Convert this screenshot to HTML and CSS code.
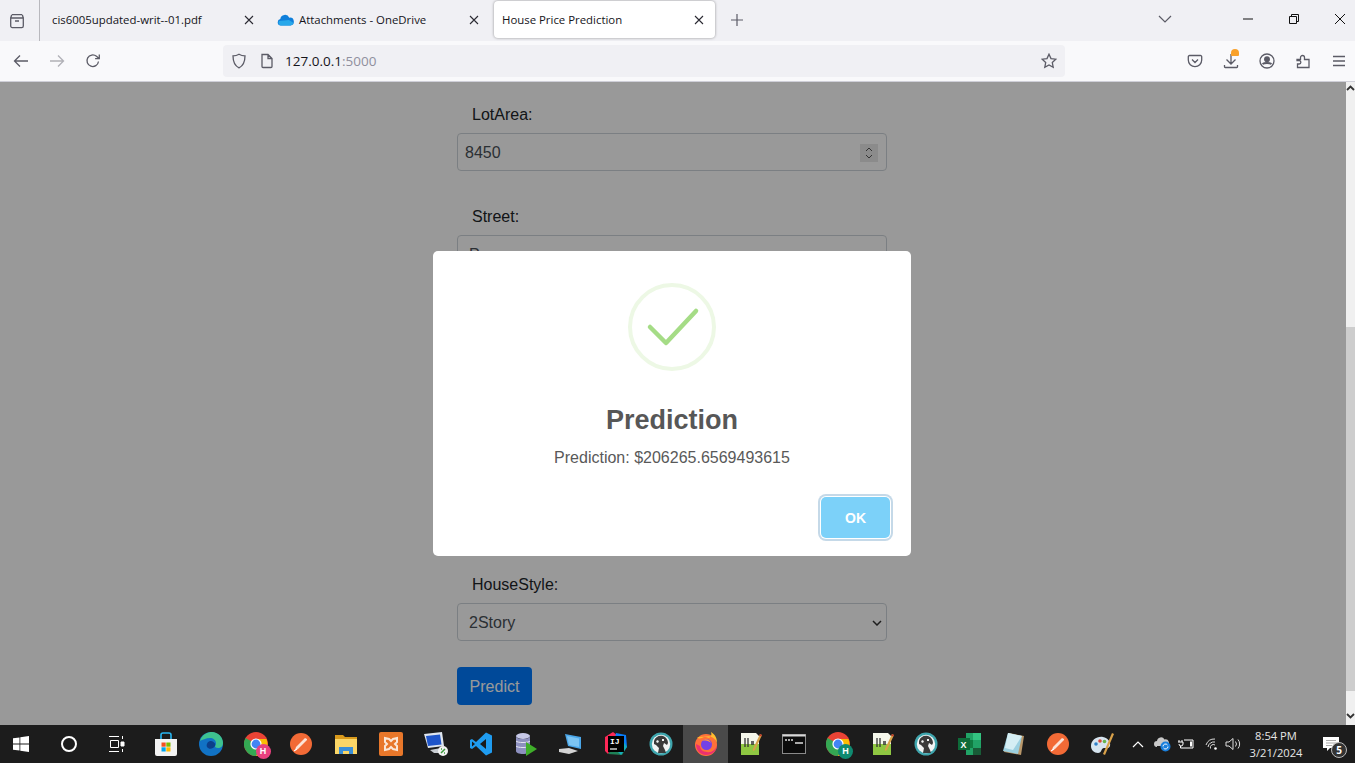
FILE: index.html
```html
<!DOCTYPE html>
<html>
<head>
    <meta charset="utf-8">
    <title>House Price Prediction</title>
    <link rel="stylesheet" href="styles.css">
</head>
<body>
    <!-- shared taskbar icons -->
    <svg class="defs" width="0" height="0">
        <symbol id="dbeaver" viewBox="0 0 24 24">
            <circle cx="12" cy="12" r="11.5" fill="#3fa5ad"/>
            <circle cx="12" cy="12" r="9.2" fill="#f2f4f4"/>
            <path d="M5 9c1-4 5-6 9-5 3 1 5 4 5 7l-1 2-3-2-1 3 2 4 1 3H9l1-5-3-3-2-1z" fill="#3a3a3a"/>
            <path d="M7 9l2-1 1 2-2 1zM13 7l2 0 0 2-2 0z" fill="#f2f4f4"/>
        </symbol>
        <symbol id="brush" viewBox="0 0 24 24">
            <circle cx="12" cy="12" r="11" fill="#f26a36"/>
            <path d="M6 18l1-3 9-9 2 1 0 1-9 9z" fill="#fbe3d8"/>
            <path d="M5 19l3-2" stroke="#fff" stroke-width="1.2"/>
        </symbol>
        <symbol id="npp" viewBox="0 0 24 24">
            <path d="M3 1h15l3 3v19H3z" fill="#f4f6ea"/>
            <path d="M3 12h18v11H3z" fill="#8fc742"/>
            <path d="M7 6v9M10 6v9M13 10h3M13 12h3" stroke="#333" stroke-width="1.3" fill="none"/>
            <path d="M15 17L22 2l2 1-7 15-2 1z" fill="#d8a24a"/>
            <path d="M22 2l2 1-.8 1.6-2-1z" fill="#c0392b"/>
        </symbol>
        <symbol id="chrome" viewBox="0 0 24 24">
            <circle cx="12" cy="12" r="12" fill="#ea4335"/>
            <path d="M12 12L1.6 6A12 12 0 0 0 12 24l6-10z" fill="#34a853"/>
            <path d="M12 7h10.4A12 12 0 0 1 12 24l6-10z" fill="#fbbc04"/>
            <circle cx="12" cy="12" r="5.6" fill="#fff"/>
            <circle cx="12" cy="12" r="4.4" fill="#4285f4"/>
        </symbol>
    </svg>

    <div class="tabbar">
        <div class="view-btn">
            <svg width="16" height="16" viewBox="0 0 16 16" fill="none" stroke="#5b5b66" stroke-width="1.3"><path d="M3 1.7h10M1.7 5h12.6v8a1.6 1.6 0 0 1-1.6 1.6H3.3A1.6 1.6 0 0 1 1.7 13zM1.7 5l1-3.3M14.3 5l-1-3.3M6 8h4"/></svg>
        </div>
        <div class="tab">
            <span class="tab-title">cis6005updated-writ--01.pdf</span>
            <svg class="tab-close" width="10" height="10" viewBox="0 0 10 10"><path d="M1 1l8 8M9 1L1 9"/></svg>
        </div>
        <div class="tab tab-second">
            <svg class="tab-icon" width="17" height="12" viewBox="0 0 17 12"><path d="M3.6 11.5A3.3 3.3 0 0 1 3.3 5a4.7 4.7 0 0 1 9-1.3A3.9 3.9 0 0 1 13.5 11.5z" fill="#0f7fdb"/><path d="M3.6 11.5A3.3 3.3 0 0 1 2 7l10-1 4.5 3a3.6 3.6 0 0 1-3 2.5z" fill="#28a8ea"/></svg>
            <span class="tab-title">Attachments - OneDrive</span>
            <svg class="tab-close" width="10" height="10" viewBox="0 0 10 10"><path d="M1 1l8 8M9 1L1 9"/></svg>
        </div>
        <div class="tab tab-active">
            <span class="tab-title">House Price Prediction</span>
            <svg class="tab-close" width="10" height="10" viewBox="0 0 10 10"><path d="M1 1l8 8M9 1L1 9"/></svg>
        </div>
        <svg class="new-tab" width="14" height="14" viewBox="0 0 14 14"><path d="M7 1v12M1 7h12"/></svg>
        <div class="window-btns">
            <svg class="tabs-list" width="14" height="8" viewBox="0 0 14 8"><path d="M1 1l6 6 6-6"/></svg>
            <svg class="win-btn" width="10" height="10" viewBox="0 0 10 10"><path d="M0 5h10"/></svg>
            <svg class="win-btn" width="10" height="10" viewBox="0 0 10 10"><path d="M.5 2.5h7v7h-7zM2.5 2.5v-2h7v7h-2"/></svg>
            <svg class="win-btn" width="10" height="10" viewBox="0 0 10 10"><path d="M0 0l10 10M10 0L0 10"/></svg>
        </div>
    </div>

    <div class="toolbar">
        <svg class="nav-icon" width="16" height="16" viewBox="0 0 16 16"><path d="M15 8H1.5M7 2.5L1.5 8 7 13.5"/></svg>
        <svg class="nav-icon nav-off" width="16" height="16" viewBox="0 0 16 16"><path d="M1 8h13.5M9 2.5L14.5 8 9 13.5"/></svg>
        <svg class="nav-icon" width="16" height="16" viewBox="0 0 16 16"><path d="M13.5 8.5A5.8 5.8 0 1 1 11.5 3.3L14 5.5M14.3 1.500v4.200h-4.200"/></svg>
        <div class="urlbar">
            <svg class="url-icon" width="16" height="16" viewBox="0 0 16 16"><path d="M8 1.200c2 1.200 4 1.600 6 1.600 0 5.500-1.500 10-6 12C3.500 12.800 2 8.300 2 2.800c2 0 4-.4 6-1.600z"/></svg>
            <svg class="url-icon page-icon" width="14" height="16" viewBox="0 0 14 16"><path d="M2 1.500h6l4 4v8a1 1 0 0 1-1 1H3a1 1 0 0 1-1-1zM8 1.500v4h4"/></svg>
            <span class="url-text">127.0.0.1<span class="url-port">:5000</span></span>
            <svg class="url-icon star-icon" width="16" height="16" viewBox="0 0 16 16"><path d="M8 1.200l2 4.400 4.800.6-3.500 3.300.9 4.800L8 11.900l-4.200 2.400.9-4.800L1.200 6.200 6 5.600z"/></svg>
        </div>
        <div class="tool-icons">
            <svg class="nav-icon" width="16" height="16" viewBox="0 0 16 16"><path d="M2.500 2.500h11a1.200 1.200 0 0 1 1.200 1.200V7A6.700 6.700 0 0 1 1.300 7V3.700a1.200 1.200 0 0 1 1.200-1.200zM5 6.500l3 3 3-3"/></svg>
            <div class="download">
                <svg class="nav-icon" width="16" height="16" viewBox="0 0 16 16"><path d="M8 1v9.500M3.500 6.500L8 11l4.500-4.500M1.500 12v1.800a.7.7 0 0 0 .7.7h11.600a.7.7 0 0 0 .7-.7V12"/></svg>
                <span class="download-badge"></span>
            </div>
            <svg class="nav-icon" width="16" height="16" viewBox="0 0 16 16"><circle cx="8" cy="8" r="7"/><circle cx="8" cy="6.300" r="2.300" fill="#5b5b66"/><path d="M3.500 11c2-1.500 7-1.500 9 0" stroke-width="2"/></svg>
            <svg class="nav-icon" width="16" height="16" viewBox="0 0 16 16"><path d="M2 6.500h3.500V4.500a2 2 0 0 1 4 0v2H14v8H2.500v-3.500h1.700a1.500 1.500 0 0 0 0-3.300H2z"/></svg>
            <svg class="nav-icon" width="16" height="16" viewBox="0 0 16 16"><path d="M2 3.500h12M2 8h12M2 12.500h12"/></svg>
        </div>
    </div>

    <div class="viewport">
        <div class="page">
            <form class="predict-form">
                <div class="form-group">
                    <label>LotArea:</label>
                    <div class="form-control">
                        <span>8450</span>
                        <span class="spinner">
                            <svg width="8" height="12" viewBox="0 0 8 12"><path d="M1 4l3-3 3 3M1 8l3 3 3-3"/></svg>
                        </span>
                    </div>
                </div>
                <div class="form-group">
                    <label>Street:</label>
                    <div class="form-control form-select">
                        <span>Pave</span>
                    </div>
                </div>
                <div class="form-spacer"></div>
                <div class="form-group form-last">
                    <label>HouseStyle:</label>
                    <div class="form-control form-select">
                        <span>2Story</span>
                        <svg class="select-arrow" width="10" height="6" viewBox="0 0 10 6"><path d="M1 1l4 4 4-4"/></svg>
                    </div>
                </div>
                <button type="button" class="btn-predict">Predict</button>
            </form>
            <div class="overlay">
                <div class="modal">
                    <div class="success-ring">
                        <svg width="88" height="88" viewBox="0 0 88 88"><path d="M22 44l16 16 30-32"/></svg>
                    </div>
                    <h2 class="modal-title">Prediction</h2>
                    <p class="modal-text">Prediction: $206265.6569493615</p>
                    <div class="modal-footer">
                        <button type="button" class="btn-ok">OK</button>
                    </div>
                </div>
            </div>
        </div>
        <div class="scrollbar">
            <svg class="scroll-arrow" width="9" height="9" viewBox="0 0 9 9"><path d="M1 6l3.500-3.500L8 6"/></svg>
            <div class="scroll-track"><div class="scroll-thumb"></div></div>
            <svg class="scroll-arrow scroll-down" width="9" height="9" viewBox="0 0 9 9"><path d="M1 3l3.500 3.500L8 3"/></svg>
        </div>
    </div>

    <div class="taskbar">
        <div class="start">
            <svg width="16" height="16" viewBox="0 0 16 16" fill="#fff"><path d="M0 2.300l6.500-.9v6.200H0zM7.300 1.300L16 0v7.600H7.300zM0 8.400h6.500v6.200L0 13.700zM7.300 8.400H16V16l-8.700-1.300z"/></svg>
        </div>
        <div class="cortana"><span class="cortana-ring"></span></div>
        <div class="taskview">
            <svg width="16" height="16" viewBox="0 0 16 16" fill="none" stroke="#fff"><path d="M0 .5h10M0 15.500h10M1.500 4.500h8v7h-8zM13.500 0v3M13.500 13v3"/><path d="M12 6h3v4h-3z" fill="#fff"/></svg>
        </div>

        <div class="task-item">
            <svg width="24" height="24" viewBox="0 0 24 24"><path d="M1 7h22v15a2 2 0 0 1-2 2H3a2 2 0 0 1-2-2z" fill="#f3f3f3"/><path d="M7 7V3a2 2 0 0 1 2-2h6a2 2 0 0 1 2 2v4" fill="none" stroke="#29b6f2" stroke-width="1.600"/><path d="M7.500 10.500h4.200v4.200H7.500z" fill="#f25022"/><path d="M12.300 10.500h4.200v4.200h-4.200z" fill="#7fba00"/><path d="M7.500 15.300h4.200v4.200H7.500z" fill="#00a4ef"/><path d="M12.300 15.300h4.200v4.200h-4.200z" fill="#ffb900"/></svg>
        </div>
        <div class="task-item">
            <svg width="24" height="24" viewBox="0 0 24 24"><circle cx="12" cy="12" r="12" fill="#1172c4"/><path d="M1 9C3 2 9 0 13 0c6 0 11 5 11 11 0 3-2 5-5 5-2 0-3-1-3-2 1-1 1-2 1-3 0-3-3-5-6-5-4 0-8 2-10 3z" fill="#3ec28f"/><path d="M16 14c-2 3-6 4-8 1-1-2 0-5 3-6 3 0 6 2 5 5z" fill="#0c3f8a"/></svg>
        </div>
        <div class="task-item">
            <div class="badged">
                <svg width="24" height="24"><use href="#chrome"/></svg>
                <span class="letter-badge badge-pink">H</span>
            </div>
        </div>
        <div class="task-item"><svg width="24" height="24"><use href="#brush"/></svg></div>
        <div class="task-item">
            <svg width="24" height="24" viewBox="0 0 24 24"><path d="M1 3h8l2 2h12v17H1z" fill="#d99a1c"/><path d="M1 7h22v15H1z" fill="#fbd667"/><path d="M5 22v-7h14v7h-4v-3H9v3z" fill="#3a8fd8"/></svg>
        </div>
        <div class="task-item">
            <svg width="24" height="24" viewBox="0 0 24 24"><rect width="24" height="24" rx="2" fill="#e8772a"/><path d="M6 6l4 1 2 2 2-2 4-1v4l-2 2 2 2v4l-4-1-2-2-2 2-4 1v-4l2-2-2-2z" fill="none" stroke="#fbe6d6" stroke-width="2"/></svg>
        </div>
        <div class="task-item">
            <svg width="26" height="26" viewBox="0 0 26 26"><path d="M1 3l18-2 2 14-16 2z" fill="#dfe5ee"/><path d="M3 5l14-1.500 1.500 10L5 15z" fill="#1f55c9"/><path d="M7 19l11-2 3 5H11z" fill="#c9cdd2"/><circle cx="20" cy="20" r="5" fill="#f2f2f2"/><path d="M18 22l4-4M18 18h1M21 22h1" stroke="#3a9a3a" stroke-width="1.500"/></svg>
        </div>
        <div class="task-item">
            <svg width="24" height="24" viewBox="0 0 24 24"><path d="M17 .5l6 3v17l-6 3L7 14l-4 3-2-1V8l2-1 4 3z" fill="#1f9cf0"/><path d="M17 7l-6 5 6 5z" fill="#1a1a1a"/><path d="M3 9.500L6 12l-3 2.500z" fill="#1a1a1a"/></svg>
        </div>
        <div class="task-item">
            <svg width="24" height="24" viewBox="0 0 24 24"><ellipse cx="9" cy="4" rx="7" ry="3" fill="#c7c9e8"/><path d="M2 4v15c0 2 3 3 7 3s7-1 7-3V4c0 2-3 3-7 3S2 6 2 4z" fill="#8d90bf"/><path d="M2 9c1 2 13 2 14 0M2 14c1 2 13 2 14 0" stroke="#e6e6f2" fill="none"/><path d="M12 10l11 7-11 7z" fill="#3fae2a"/></svg>
        </div>
        <div class="task-item">
            <svg width="24" height="24" viewBox="0 0 24 24"><path d="M6 2l16 3v12L9 14z" fill="#4aa6e8"/><path d="M8 4l12 2.500v8.500L10 13z" fill="#7cc4f2"/><path d="M0 17l10-1 9 3-9 3-10-2z" fill="#d4d4d4"/></svg>
        </div>
        <div class="task-item">
            <svg width="24" height="24" viewBox="0 0 24 24"><path d="M1 5l8-5 4 3-9 19-3-3z" fill="#fe2857"/><path d="M12 1l10 2 1 12-6 8-8-8z" fill="#087cfa"/><path d="M4 22l14 1 5-8-6-9z" fill="#21d789" opacity=".55"/><rect x="4" y="4" width="16" height="16" fill="#000"/><text x="6" y="12" class="ij-text">IJ</text><path d="M6 17h7" stroke="#fff" stroke-width="1.200"/></svg>
        </div>
        <div class="task-item"><svg width="24" height="24"><use href="#dbeaver"/></svg></div>
        <div class="task-item task-active">
            <svg width="24" height="24" viewBox="0 0 24 24"><circle cx="12" cy="13" r="11" fill="#ff7139"/><path d="M3 6c3 1 5 0 7-1 5-2 11 0 13 6 0-4-1-8-6-11 1 3 0 5-2 6-3-1-8-2-12 0z" fill="#ffbd2f"/><path d="M2 12c0 7 5 11 10 11 6 0 11-4 11-10-1 5-6 8-10 7-4 0-7-3-7-6z" fill="#e31587" opacity=".7"/><circle cx="12.500" cy="12.500" r="5.500" fill="#7542e5"/><path d="M8 9c3-3 8-2 9 2-2-2-5-3-9-2z" fill="#ff9640"/></svg>
        </div>
        <div class="task-item narrow"><svg width="24" height="24"><use href="#npp"/></svg></div>
        <div class="task-item narrow">
            <svg width="24" height="20" viewBox="0 0 24 20"><rect x=".5" y=".5" width="23" height="19" fill="#0c0c0c" stroke="#8a8a8a"/><path d="M.5.500h23v2H.500z" fill="#d8d8d8"/><path d="M3 6h2M6 6h2M9 6h2M13 9h8" stroke="#ddd" stroke-width="1.500"/></svg>
        </div>
        <div class="task-item narrow">
            <div class="badged">
                <svg width="24" height="24"><use href="#chrome"/></svg>
                <span class="letter-badge badge-green">H</span>
            </div>
        </div>
        <div class="task-item narrow"><svg width="24" height="24"><use href="#npp"/></svg></div>
        <div class="task-item narrow"><svg width="24" height="24"><use href="#dbeaver"/></svg></div>
        <div class="task-item narrow">
            <svg width="24" height="24" viewBox="0 0 24 24"><path d="M8 1h15v22H8z" fill="#21a366"/><path d="M15 1h8v7h-8z" fill="#33c481"/><path d="M8 8h7v8H8z" fill="#107c41"/><path d="M15 16h8v7h-8z" fill="#185c37"/><rect x="0" y="6" width="12" height="12" fill="#0e6b39"/><text x="2.500" y="15.500" class="xl-text">X</text></svg>
        </div>
        <div class="task-item narrow">
            <svg width="24" height="24" viewBox="0 0 24 24"><path d="M7 1l15 3-3 19L2 20z" fill="#b9976a"/><path d="M6 1l14 3-4 18L1 19z" fill="#9cd0e0"/><path d="M6 1l14 3-9 14-8-2z" fill="#d5eef4"/></svg>
        </div>
        <div class="task-item narrow"><svg width="24" height="24"><use href="#brush"/></svg></div>
        <div class="task-item narrow">
            <svg width="24" height="24" viewBox="0 0 24 24"><path d="M1 14C1 8 7 4 13 5c5 1 8 5 7 9-1 3-4 2-6 2-3 0-2 5-6 5-4 0-7-3-7-7z" fill="#d6e4ef"/><circle cx="6" cy="12" r="1.800" fill="#2f80c8"/><circle cx="10" cy="9" r="1.800" fill="#d9473a"/><circle cx="14.500" cy="9.500" r="1.800" fill="#66b54a"/><path d="M22 1l2 1-9 21-2-1z" fill="#d9a24a"/></svg>
        </div>

        <div class="tray">
            <svg class="tray-caret" width="12" height="7" viewBox="0 0 12 7"><path d="M1 6l5-5 5 5"/></svg>
            <svg class="tray-cloud" width="18" height="16" viewBox="0 0 18 16"><path d="M4 11a3 3 0 0 1 0-6 4 4 0 0 1 7.500-1.500A3.500 3.500 0 0 1 14 10H4z" fill="#c9c9c9"/><circle cx="12.500" cy="10.500" r="5" fill="#1a7fdc"/><path d="M10 10.500a2.500 2.500 0 0 1 4.500-1.500M15 10.500a2.500 2.500 0 0 1-4.500 1.500" stroke="#fff" fill="none"/></svg>
            <svg class="tray-power" width="16" height="12" viewBox="0 0 16 12"><path d="M1 2v2M4 2v2M0 4h5v2a2 2 0 0 1-4 0M2.500 8v2H6M6 2h9v8H6" fill="none" stroke="#fff"/><path d="M12 3.500h2v5h-2z" fill="#fff"/></svg>
            <svg class="tray-wifi" width="14" height="14" viewBox="0 0 14 14"><path d="M1 8a9 9 0 0 1 9-6M3 10a6 6 0 0 1 7-5M5.500 11.500a3 3 0 0 1 4.500-3.500"/><circle cx="10.500" cy="11.500" r="1.300" fill="#fff" stroke="none"/></svg>
            <svg class="tray-volume" width="16" height="14" viewBox="0 0 16 14"><path d="M1 5h3l4-3.500v11L4 9H1zM10.500 4.500a4 4 0 0 1 0 5M13 2.500a7 7 0 0 1 0 9"/></svg>
            <div class="clock">
                <span>8:54 PM</span>
                <span>3/21/2024</span>
            </div>
            <div class="notify">
                <svg width="16" height="15" viewBox="0 0 16 15"><path d="M0 0h16v11H7l-3 3v-3H0z" fill="#fff"/><path d="M3 3.500h10M3 6h10M3 8.500h6" stroke="#888" stroke-width=".7"/></svg>
                <span class="notify-count">5</span>
            </div>
        </div>
    </div>
</body>
</html>
```

FILE: styles.css
```css
html, body {
    height: 100%;
    margin: 0;
    overflow: hidden;
}
body {
    display: flex;
    flex-direction: column;
    font-family: "Liberation Sans", Arial, sans-serif;
}
.defs {
    position: absolute;
}

/* browser tabs */
.tabbar {
    height: 41px;
    flex: none;
    display: flex;
    align-items: flex-start;
    background: #f0f0f4;
    font-family: "Open Sans", sans-serif;
    font-size: 11.4px;
    color: #15141a;
}
.view-btn {
    width: 33px;
    height: 41px;
    padding-right: 6px;
    border-right: 1px solid #b8b8bd;
    display: flex;
    align-items: center;
    justify-content: center;
}
.tab {
    width: 224px;
    height: 37px;
    margin-top: 1px;
    box-sizing: border-box;
    padding: 0 10px 0 12px;
    display: flex;
    align-items: center;
    border-radius: 4px;
}
.tab-second {
    width: 226px;
    margin-right: 4px;
    padding-left: 13px;
    padding-right: 11px;
}
.tab-icon {
    margin-right: 5px;
}
.tab-title {
    flex: 1;
    white-space: nowrap;
}
.tab-close {
    stroke: #2b2a33;
    stroke-width: 1.1;
    fill: none;
}
.tab-active {
    width: 221px;
    padding: 0 11px 0 8px;
    background: #fff;
    box-shadow: 0 0 3px rgba(0, 0, 0, .4);
}
.new-tab {
    margin: 13px 0 0 15px;
    stroke: #5b5b66;
    stroke-width: 1.2;
    fill: none;
}
.window-btns {
    margin-left: auto;
    display: flex;
    align-items: center;
    height: 37px;
}
.tabs-list {
    margin-right: 71px;
    stroke: #5b5b66;
    stroke-width: 1.2;
    fill: none;
}
.win-btn {
    margin-right: 36px;
    stroke: #111;
    stroke-width: 1;
    fill: none;
}
.win-btn:last-child {
    margin-right: 10px;
}

/* toolbar */
.toolbar {
    height: 41px;
    flex: none;
    box-sizing: border-box;
    display: flex;
    align-items: center;
    padding-left: 13px;
    background: #f9f9fb;
    border-bottom: 1px solid #cfcfd8;
}
.nav-icon {
    flex: none;
    margin-right: 20px;
    stroke: #5b5b66;
    stroke-width: 1.3;
    fill: none;
}
.nav-off {
    opacity: .45;
}
.urlbar {
    width: 842px;
    height: 32px;
    flex: none;
    margin-left: 102px;
    display: flex;
    align-items: center;
    box-sizing: border-box;
    padding: 0 8px;
    background: #f0f0f4;
    border-radius: 4px;
}
.url-icon {
    stroke: #5b5b66;
    stroke-width: 1.3;
    fill: none;
}
.page-icon {
    margin-left: 13px;
}
.url-text {
    margin-left: 11px;
    flex: 1;
    font-family: "Open Sans", sans-serif;
    font-size: 13.5px;
    color: #15141a;
}
.url-port {
    color: #8f8f9d;
}
.tool-icons {
    flex: none;
    display: flex;
    align-items: center;
    margin-left: 122px;
}
.download {
    position: relative;
    display: flex;
}
.download-badge {
    position: absolute;
    left: 8px;
    top: -4px;
    width: 8px;
    height: 7px;
    background: #f9a12a;
    border-radius: 4px 4px 1px 1px;
}

/* page behind the dialog */
.viewport {
    flex: 1;
    min-height: 0;
    display: flex;
}
.page {
    flex: 1;
    position: relative;
    overflow: hidden;
    padding-right: 2px;
    background: #fff;
    font-size: 16px;
    color: #212529;
}
.predict-form {
    width: 430px;
    margin: 19px auto 0;
}
.form-group {
    padding-top: 2px;
    margin-bottom: 32px;
}
.form-group label {
    display: block;
    height: 24px;
    line-height: 24px;
    margin-bottom: 6px;
    padding-left: 15px;
}
.form-control {
    height: 38px;
    box-sizing: border-box;
    display: flex;
    align-items: center;
    justify-content: space-between;
    padding: 2px 8px 0 7px;
    border: 1px solid #ced4da;
    border-radius: 4px;
    color: #495057;
}
.form-select {
    padding: 2px 4px 0 11px;
}
.form-spacer {
    height: 266px;
}
.form-group.form-last {
    margin-bottom: 26px;
}
.spinner {
    width: 18px;
    height: 18px;
    display: flex;
    align-items: center;
    justify-content: center;
    background: #e8e8e8;
}
.spinner svg {
    stroke: #555;
    fill: none;
}
.select-arrow {
    stroke: #333;
    stroke-width: 1.5;
    fill: none;
}
.btn-predict {
    width: 75px;
    height: 38px;
    padding: 2px 0 0;
    border: none;
    border-radius: 4px;
    background: #007bff;
    color: #fff;
    font: 16px "Liberation Sans", Arial, sans-serif;
}

/* dialog */
.overlay {
    position: absolute;
    inset: 0;
    padding-right: 2px;
    display: flex;
    align-items: center;
    justify-content: center;
    background: rgba(0, 0, 0, .4);
}
.modal {
    width: 478px;
    height: 305px;
    box-sizing: border-box;
    display: flex;
    flex-direction: column;
    align-items: center;
    padding-top: 32px;
    background: #fff;
    border-radius: 5px;
}
.success-ring {
    width: 88px;
    height: 88px;
    box-sizing: border-box;
    border: 4px solid #edf8e5;
    border-radius: 50%;
    display: flex;
    align-items: center;
    justify-content: center;
}
.success-ring svg {
    flex: none;
    stroke: #a5dc86;
    stroke-width: 4.5;
    stroke-linecap: round;
    stroke-linejoin: round;
    fill: none;
}
.modal-title {
    margin: 33px 0 0;
    font-size: 27px;
    line-height: 32px;
    font-weight: 600;
    color: #575757;
}
.modal-text {
    margin: 11px 0 0;
    font-size: 16px;
    line-height: 22px;
    color: #595959;
}
.modal-footer {
    align-self: flex-end;
    margin: 28px 21px 0 0;
}
.btn-ok {
    display: block;
    width: 69px;
    height: 41px;
    padding: 0;
    border: none;
    border-radius: 5px;
    background: #7cd1f9;
    box-shadow: 0 0 0 1px #fff, 0 0 0 3px #c5d9e8;
    color: #fff;
    font: 600 14px "Liberation Sans", Arial, sans-serif;
}

/* scrollbar */
.scrollbar {
    width: 9px;
    flex: none;
    display: flex;
    flex-direction: column;
    background: #f0f0f0;
}
.scroll-arrow {
    flex: none;
    margin-top: 2px;
    stroke: #333;
    stroke-width: 1.8;
    fill: none;
}
.scroll-down {
    margin-bottom: 5px;
}
.scroll-track {
    flex: 1;
    padding-top: 234px;
    padding-bottom: 18px;
    display: flex;
}
.scroll-thumb {
    flex: 1;
    background: #cdcdcd;
}

/* windows taskbar */
.taskbar {
    height: 38px;
    flex: none;
    display: flex;
    align-items: center;
    background: #1c1c1c;
    color: #fff;
}
.start {
    width: 42px;
    flex: none;
    display: flex;
    justify-content: center;
}
.cortana {
    width: 54px;
    flex: none;
    display: flex;
    justify-content: center;
}
.cortana-ring {
    width: 16px;
    height: 16px;
    box-sizing: border-box;
    border: 2.5px solid #fff;
    border-radius: 50%;
}
.taskview {
    width: 42px;
    flex: none;
    margin-right: 5px;
    display: flex;
    justify-content: center;
}
.task-item {
    width: 45px;
    height: 38px;
    flex: none;
    display: flex;
    align-items: center;
    justify-content: center;
}
.task-item.narrow {
    width: 44px;
}
.task-active {
    background: #4a4a4a;
}
.badged {
    position: relative;
    display: flex;
}
.letter-badge {
    position: absolute;
    right: -3px;
    bottom: -3px;
    width: 15px;
    height: 15px;
    border-radius: 50%;
    font: 700 9px/15px "Liberation Sans", Arial, sans-serif;
    text-align: center;
}
.badge-pink {
    background: #e8417f;
}
.badge-green {
    background: #0f8a70;
}
.ij-text {
    font: 700 8px "Liberation Mono", monospace;
    fill: #fff;
}
.xl-text {
    font: 700 9px "Liberation Sans", Arial, sans-serif;
    fill: #fff;
}
.tray {
    flex: none;
    display: flex;
    align-items: center;
    margin-left: 8px;
}
.tray-caret {
    margin-right: 9px;
    stroke: #fff;
    stroke-width: 1.2;
    fill: none;
}
.tray-cloud {
    margin-right: 7px;
}
.tray-power {
    margin-right: 11px;
}
.tray-wifi {
    margin-right: 6px;
    stroke: #ddd;
    fill: none;
}
.tray-volume {
    margin-right: 4px;
    stroke: #ddd;
    fill: none;
}
.clock {
    width: 62px;
    display: flex;
    flex-direction: column;
    align-items: center;
    gap: 3px;
    font-family: "Open Sans", sans-serif;
    font-size: 11.2px;
    line-height: 14px;
    color: #e6e6e6;
}
.notify {
    position: relative;
    margin-left: 16px;
    display: flex;
}
.notify-count {
    position: absolute;
    left: 8px;
    top: 5px;
    width: 14px;
    height: 14px;
    border: 1.5px solid #bbb;
    border-radius: 50%;
    background: #333;
    font: 700 10px/14px "Open Sans", sans-serif;
    text-align: center;
}
```
